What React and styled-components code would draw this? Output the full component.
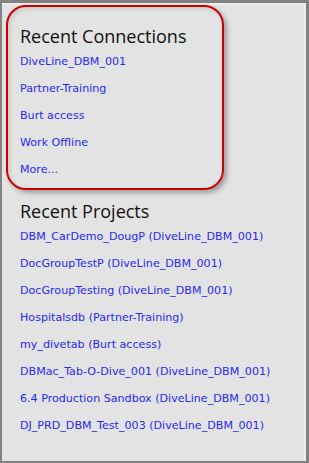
import React from "react";
import styled, { createGlobalStyle } from "styled-components";

const GlobalStyle = createGlobalStyle`
  html, body {
    margin: 0;
    padding: 0;
    background: #e3e3e3;
  }
`;

const Frame = styled.div`
  box-sizing: border-box;
  width: 309px;
  height: 463px;
  background: #e3e3e3;
  border-style: solid;
  border-color: #828282;
  border-width: 3px 3px 2px 2px;
  box-shadow: inset -2px 2px 0 #ececec;
  overflow: hidden;
`;

const ConnectionsBox = styled.div`
  box-sizing: border-box;
  width: 218px;
  margin: 2px 0 0 4px;
  padding: 17px 10px 5px 12px;
  border: 2px solid #c80000;
  border-radius: 20px;
  box-shadow: 3px 3px 5px rgba(0, 0, 0, 0.3),
    inset 2px 2px 4px rgba(0, 0, 0, 0.12);
`;

const Section = styled.div`
  padding: 9px 0 0 18px;
`;

const Heading = styled.h2`
  margin: 0;
  font-family: "Open Sans", "Noto Sans", sans-serif;
  font-weight: 400;
  font-size: 18px;
  line-height: 24px;
  color: #111;
`;

const LinkList = styled.ul`
  list-style: none;
  margin: 0;
  padding: 0;
`;

const LinkItem = styled.li`
  font-family: "DejaVu Sans", sans-serif;
  font-size: 11.1px;
  line-height: 27px;
  white-space: nowrap;
`;

const Link = styled.a`
  color: #2828f4;
  text-decoration: none;
  cursor: pointer;
  &:hover {
    text-decoration: underline;
  }
`;

const connections = [
  "DiveLine_DBM_001",
  "Partner-Training",
  "Burt access",
  "Work Offline",
  "More...",
];

const projects = [
  "DBM_CarDemo_DougP (DiveLine_DBM_001)",
  "DocGroupTestP (DiveLine_DBM_001)",
  "DocGroupTesting (DiveLine_DBM_001)",
  "Hospitalsdb (Partner-Training)",
  "my_divetab (Burt access)",
  "DBMac_Tab-O-Dive_001 (DiveLine_DBM_001)",
  "6.4 Production Sandbox (DiveLine_DBM_001)",
  "DJ_PRD_DBM_Test_003 (DiveLine_DBM_001)",
];

const App = () => {
  return (
    <Frame>
      <GlobalStyle />
      <ConnectionsBox>
        <Heading>Recent Connections</Heading>
        <LinkList>
          {connections.map((name) => (
            <LinkItem key={name}>
              <Link>{name}</Link>
            </LinkItem>
          ))}
        </LinkList>
      </ConnectionsBox>
      <Section>
        <Heading>Recent Projects</Heading>
        <LinkList>
          {projects.map((name) => (
            <LinkItem key={name}>
              <Link>{name}</Link>
            </LinkItem>
          ))}
        </LinkList>
      </Section>
    </Frame>
  );
};

export default App;
